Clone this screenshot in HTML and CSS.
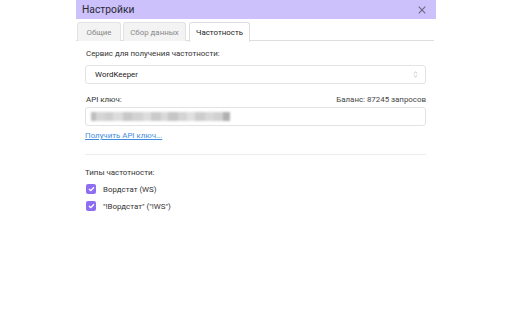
FILE: index.html
```html
<!DOCTYPE html>
<html>
<head>
<meta charset="utf-8">
<link rel="stylesheet" href="styles.css">
</head>
<body>
<div class="dialog">
  <div class="header">
    <span class="title">Настройки</span>
    <span class="close">
      <svg width="8" height="8" viewBox="0 0 8 8"><path d="M0.7 0.7L7.3 7.3M7.3 0.7L0.7 7.3" stroke="#6b6880" stroke-width="1.1"/></svg>
    </span>
  </div>
  <div class="tabs">
    <div class="tab">Общие</div>
    <div class="tab">Сбор данных</div>
    <div class="tab active">Частотность</div>
  </div>
  <div class="content">
    <div class="label">Сервис для получения частотности:</div>
    <div class="select">
      <span>WordKeeper</span>
      <svg width="5" height="7" viewBox="0 0 5 7"><path d="M0.8 2.6L2.5 1L4.2 2.6M0.8 4.4L2.5 6L4.2 4.4" fill="none" stroke="#b5b5b5" stroke-width="0.8"/></svg>
    </div>
    <div class="row-label">
      <span class="label">API ключ:</span>
      <span class="balance">Баланс: 87245 запросов</span>
    </div>
    <div class="input">
      <div class="blur">
        <i style="width:5px;background:#bdbdbd"></i><i style="width:9px;background:#d6d6d6"></i><i style="width:8px;background:#cfcfcf"></i><i style="width:10px;background:#dcdcdc"></i><i style="width:9px;background:#c8c8c8"></i><i style="width:11px;background:#d2d2d2"></i><i style="width:8px;background:#dddddd"></i><i style="width:10px;background:#cbcbcb"></i><i style="width:7px;background:#d9d9d9"></i><i style="width:10px;background:#c6c6c6"></i><i style="width:9px;background:#d4d4d4"></i><i style="width:8px;background:#e0e0e0"></i><i style="width:10px;background:#cdcdcd"></i><i style="width:9px;background:#d8d8d8"></i><i style="width:9px;background:#d1d1d1"></i><i style="width:7px;background:#b0b0b0"></i>
      </div>
    </div>
    <a class="link" href="#">Получить API ключ...</a>
    <div class="divider"></div>
    <div class="label">Типы частотности:</div>
    <label class="check"><span class="box"><svg width="7" height="6" viewBox="0 0 7 6"><path d="M1 3L2.8 4.6L6 1.3" fill="none" stroke="#fff" stroke-width="1.3"/></svg></span>Вордстат (WS)</label>
    <label class="check"><span class="box"><svg width="7" height="6" viewBox="0 0 7 6"><path d="M1 3L2.8 4.6L6 1.3" fill="none" stroke="#fff" stroke-width="1.3"/></svg></span>"!Вордстат" ("!WS")</label>
  </div>
</div>
</body>
</html>
```
FILE: styles.css
```css
* { box-sizing: border-box; }
html, body { margin: 0; background: #fff; }
body {
  font-family: Roboto, "Noto Sans", sans-serif;
  font-size: 7.9px;
  color: #222;
}
.dialog {
  width: 360px;
  margin-left: 76px;
}
.header {
  height: 19px;
  background: #ccc1fb;
  display: flex;
  align-items: center;
  justify-content: space-between;
  padding: 0 10px 0 6px;
}
.title { font-size: 10.3px; color: #2a2a33; }
.close { display: flex; }
.tabs {
  display: flex;
  gap: 2px;
  padding: 3px 2px 0 1px;
  border-bottom: 1px solid #dedede;
  margin-right: 2px;
  height: 22px;
}
.tab {
  height: 19px;
  border: 1px solid #e2e2e2;
  border-bottom: none;
  border-radius: 3px 3px 0 0;
  background: #f3f3f3;
  color: #888;
  display: flex;
  align-items: center;
  justify-content: center;
}
.tab:nth-child(1) { width: 44px; }
.tab:nth-child(2) { width: 63px; }
.tab.active {
  width: 61px;
  background: #fff;
  color: #222;
  height: 20px;
  margin-bottom: -1px;
  border-color: #dedede;
  margin-left: 1px;
}
.content {
  padding: 8px 10px 0 9px;
  display: flex;
  flex-direction: column;
}
.label { color: #333; }
.content > .label:first-child { margin-left: 1px; }
.select, .input {
  height: 19px;
  border: 1px solid #e3e3e3;
  border-radius: 3px;
  display: flex;
  align-items: center;
  justify-content: space-between;
  padding: 0 7px 0 9px;
}
.select { margin-top: 7px; color: #222; }
.row-label {
  margin-top: 11px;
  display: flex;
  justify-content: space-between;
  align-items: baseline;
  padding-left: 1px;
}
.balance { color: #444; }
.input { margin-top: 3px; padding-left: 5px; }
.blur { display: flex; height: 9px; filter: blur(1.2px); }
.blur i { display: block; height: 9px; }
.link {
  margin-top: 5px;
  color: #3e8ddd;
  text-decoration: underline;
  align-self: flex-start;
}
.divider {
  height: 1px;
  background: #ececec;
  margin: 14px 0 13px;
}
.check {
  display: flex;
  align-items: center;
  color: #333;
  margin-top: 7px;
  padding-left: 1px;
}
.check + .check { margin-top: 7px; }
.box {
  width: 10px;
  height: 10px;
  border-radius: 2px;
  background: #8e6ef0;
  display: flex;
  align-items: center;
  justify-content: center;
  margin-right: 7px;
}
```
